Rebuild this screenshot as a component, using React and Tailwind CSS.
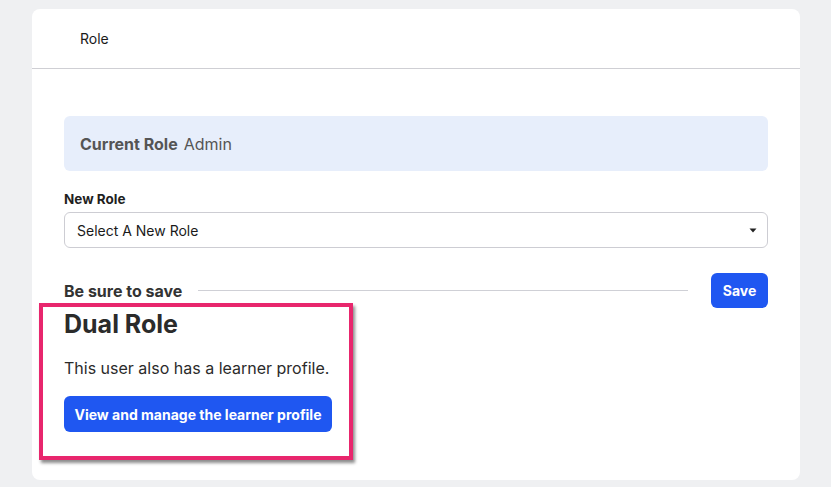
import React from 'react';

export default function App() {
  return (
    <div className="min-h-[487px] bg-[#eff0f2] pt-[9px] pl-[32px] pr-[31px] pb-[7px] font-['Inter',sans-serif]">
      <div className="bg-white rounded-lg h-[471px] flex flex-col">
        <div className="h-[60px] flex items-center pl-[48px] border-b border-[#cfcfd4] text-[14px] text-[#1a1a1a]">
          Role
        </div>

        <div className="px-[32px] pt-[47px]">
          <div className="h-[55px] rounded-md bg-[#e7eefb] flex items-center px-4 text-[16px] text-[#555]">
            <span className="font-bold">Current Role</span>
            <span className="ml-1.5">Admin</span>
          </div>

          <div className="mt-[18px] text-[13.5px] font-bold text-[#1f1f1f]">New Role</div>
          <div className="mt-[3px] h-[36px] rounded-md border border-[#cdcdd3] flex items-center justify-between pl-3 pr-[10px] text-[14px] text-[#1a1a1a]">
            <span>Select A New Role</span>
            <svg width="8" height="5" viewBox="0 0 8 5" className="mt-px">
              <path d="M0.5 0.5 L7.5 0.5 L4 4.5 Z" fill="#222" />
            </svg>
          </div>

          <div className="mt-[25px] flex items-center">
            <span className="text-[16px] font-bold text-[#333]">Be sure to save</span>
            <div className="ml-[16px] flex-1 h-px bg-[#cfd0d6]" />
            <button className="ml-[23px] h-[35px] w-[57px] rounded-md bg-[#1f57f1] text-white text-[14px] font-bold">
              Save
            </button>
          </div>

          <div className="relative -mt-[5px]">
            <div className="absolute -left-[25px] top-0 w-[314px] h-[157px] border-[4px] border-[#e8266d] shadow-[2px_3px_3px_rgba(0,0,0,0.45)] pointer-events-none" />
            <div className="pt-[7px]">
              <h2 className="text-[25px] leading-[28px] font-bold text-[#2b2b2b] font-['Inter',sans-serif]">
                Dual Role
              </h2>
              <p className="mt-[18px] text-[16px] text-[#2b2b2b]">This user also has a learner profile.</p>
              <button className="mt-[16px] h-[36px] w-[268px] rounded-md bg-[#1f57f1] text-white text-[14px] font-bold">
                View and manage the learner profile
              </button>
            </div>
          </div>
        </div>
      </div>
    </div>
  );
}
